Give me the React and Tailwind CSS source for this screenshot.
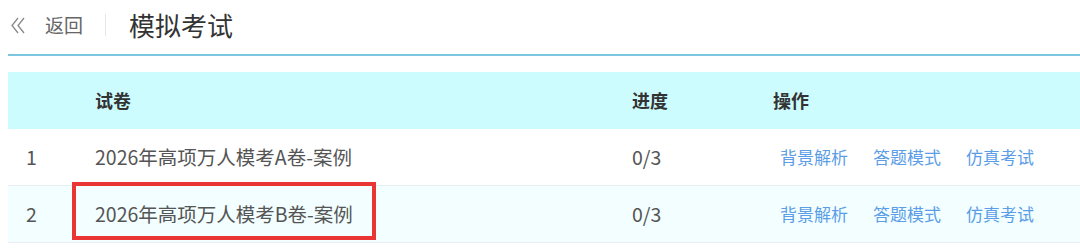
const font = { fontFamily: '"Noto Sans CJK SC", "Noto Sans", sans-serif' };

const papers = [
  { id: 1, title: "2026年高项万人模考A卷-案例", progress: "0/3", bg: "bg-white", marked: false },
  { id: 2, title: "2026年高项万人模考B卷-案例", progress: "0/3", bg: "bg-[#f2feff]", marked: true },
];

const actions = ["背景解析", "答题模式", "仿真考试"];

export default function App() {
  return (
    <div className="w-[1080px] h-[248px] bg-white overflow-hidden" style={font}>
      {/* 顶部 */}
      <header className="h-[56px] ml-[8px] flex items-center border-b-2 border-[#7cc6e0]">
        <svg className="ml-[3px] -mt-[4px]" width="14" height="17" viewBox="0 0 14 17" fill="none" stroke="#888" strokeWidth="1.3">
          <polyline points="7,1 1,8.5 7,16" />
          <polyline points="13,1 7,8.5 13,16" />
        </svg>
        <span className="ml-[20px] text-[19px] text-[#666] -mt-[4px]">返回</span>
        <span className="ml-[22px] w-px h-[22px] bg-[#e6e6e6] -mt-[4px]"></span>
        <h1 className="ml-[23px] text-[26px] text-[#333] -mt-[6px]">模拟考试</h1>
      </header>

      {/* 试卷列表 */}
      <div className="mt-[16px] ml-[8px]">
        <div className="grid grid-cols-[87px_537px_141px_1fr] h-[57px] items-center bg-[#cdfcff] font-bold text-[18px] text-[#333]">
          <div></div>
          <div>试卷</div>
          <div>进度</div>
          <div>操作</div>
        </div>
        {papers.map((p) => (
          <div
            key={p.id}
            className={`relative grid grid-cols-[87px_537px_141px_1fr] h-[57px] items-center border-b border-[#e9eff1] text-[19.5px] text-[#555] ${p.bg}`}
          >
            <div className="pl-[18px]">{p.id}</div>
            <div>{p.title}</div>
            <div>{p.progress}</div>
            <div className="flex gap-[25px] pl-[7px] text-[17px] text-[#5b9de6]">
              {actions.map((a) => (
                <span key={a}>{a}</span>
              ))}
            </div>
            {p.marked && (
              <div className="absolute left-[64px] top-[-4px] w-[304px] h-[58px] border-4 border-[#ea3535]"></div>
            )}
          </div>
        ))}
      </div>
    </div>
  );
}
